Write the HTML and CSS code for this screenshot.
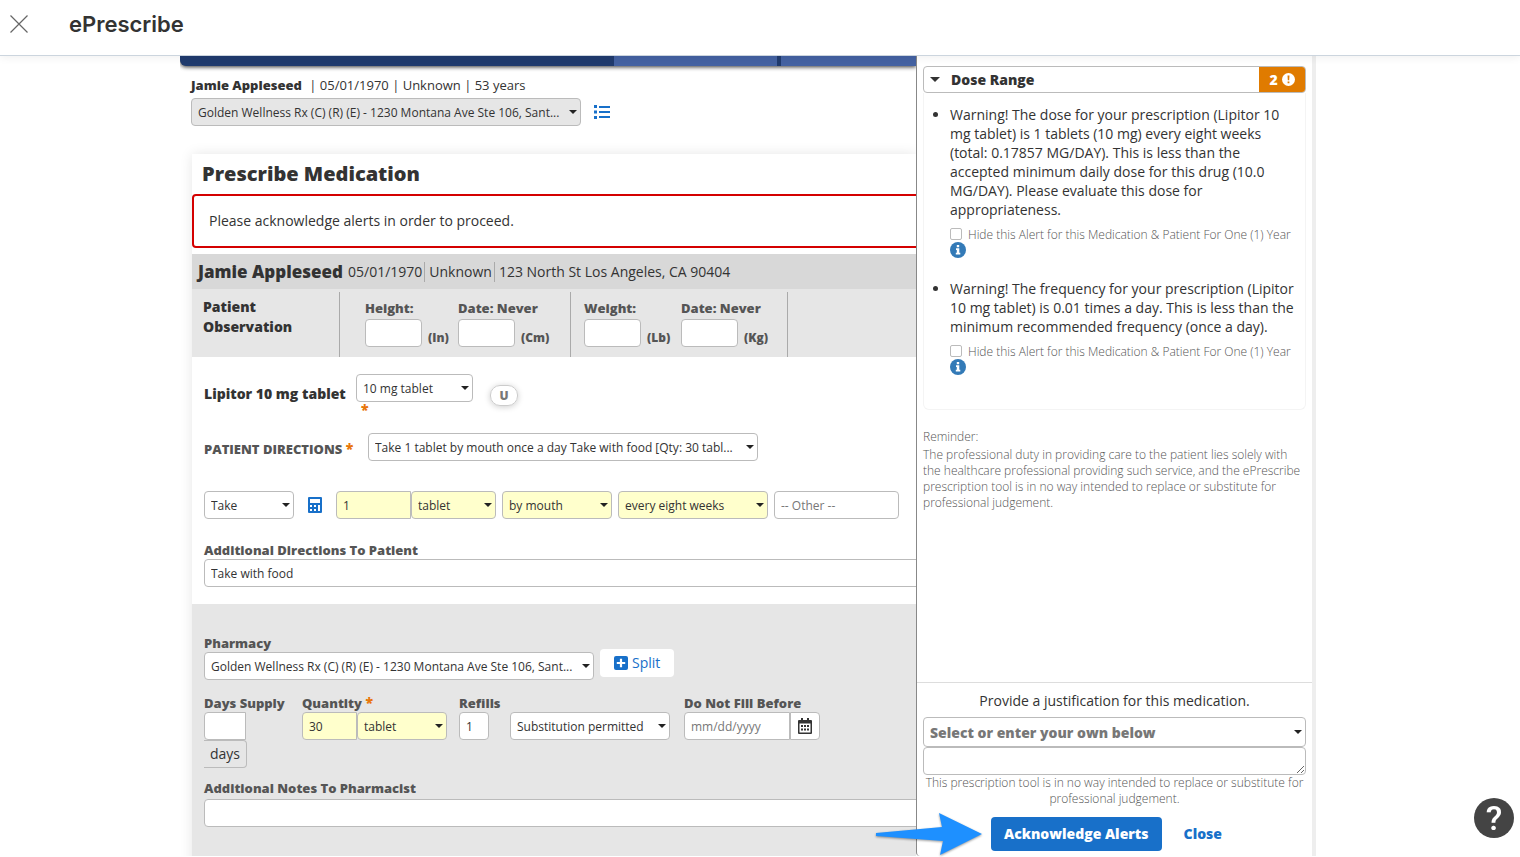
FILE: index.html
```html
<!DOCTYPE html>
<html lang="en">
  <head>
    <meta charset="UTF-8" />
    <meta name="viewport" content="width=device-width, initial-scale=1.0" />
    <title>ePrescribe</title>
    <link rel="stylesheet" href="styles.css">
  </head>
  <body>
    <header class="topbar">
      <button class="close-button" type="button" aria-label="Close">
        <svg width="18" height="18" viewBox="0 0 18 18" fill="none" stroke="#666" stroke-width="1.2">
          <path d="M0.5 0.5 17.5 17.5M17.5 0.5 0.5 17.5" />
        </svg>
      </button>
      <h1>ePrescribe</h1>
    </header>

    <div class="page">
      <main class="content">
        <nav class="nav" aria-label="Main">
          <span class="tab"></span>
          <span class="tab tab-last"></span>
        </nav>

        <div class="patient">
          <div class="patient-line"><b>Jamie Appleseed</b> | 05/01/1970 | Unknown | 53 years</div>
          <div class="patient-pharmacy">
            <select class="wide gray" aria-label="Patient pharmacy">
              <option>Golden Wellness Rx (C) (R) (E) - 1230 Montana Ave Ste 106, Sant...</option>
            </select>
            <button class="icon-button" type="button" aria-label="Pharmacy list">
              <svg width="16" height="14" viewBox="0 0 16 14" fill="#1870c9">
                <path d="M0 0h3v3H0zM0 5.5h3v3H0zM0 11h3v3H0zM5 1h11v2H5zM5 6h11v2H5zM5 11h11v2H5z" />
              </svg>
            </button>
          </div>
        </div>

        <form class="card">
          <h2>Prescribe Medication</h2>
          <div class="alert">Please acknowledge alerts in order to proceed.</div>

          <div class="person">
            <b>Jamie Appleseed</b>
            <span>05/01/1970</span>
            <span>Unknown</span>
            <span>123 North St Los Angeles, CA 90404</span>
          </div>

          <div class="observation">
            <h3>Patient Observation</h3>
            <div class="measures">
              <div class="measure">
                <label for="height-in">Height:</label>
                <div class="unit-row"><input id="height-in" type="text" /><span>(In)</span></div>
              </div>
              <div class="measure">
                <label for="height-cm">Date: Never</label>
                <div class="unit-row"><input id="height-cm" type="text" /><span>(Cm)</span></div>
              </div>
            </div>
            <div class="measures weight">
              <div class="measure">
                <label for="weight-lb">Weight:</label>
                <div class="unit-row"><input id="weight-lb" type="text" /><span>(Lb)</span></div>
              </div>
              <div class="measure">
                <label for="weight-kg">Date: Never</label>
                <div class="unit-row"><input id="weight-kg" type="text" /><span>(Kg)</span></div>
              </div>
            </div>
          </div>

          <div class="section">
            <div class="drug">
              <label class="drug-name" for="strength">Lipitor 10 mg tablet</label>
              <div class="strength">
                <select id="strength"><option>10 mg tablet</option></select>
                <span class="star">*</span>
              </div>
              <span class="badge">U</span>
            </div>

            <div class="directions">
              <label for="directions">PATIENT DIRECTIONS <span class="star">*</span></label>
              <select id="directions" class="wide">
                <option>Take 1 tablet by mouth once a day Take with food [Qty: 30 tabl...</option>
              </select>
            </div>

            <div class="sig">
              <select class="verb" aria-label="Verb"><option>Take</option></select>
              <button class="calc" type="button" aria-label="Dose calculator">
                <svg width="14" height="16" viewBox="0 0 14 16" fill="#1870c9">
                  <path fill-rule="evenodd" d="M1 0h12a1 1 0 0 1 1 1v14a1 1 0 0 1-1 1H1a1 1 0 0 1-1-1V1a1 1 0 0 1 1-1zM2 2v4h10V2zM2 8v2h2V8zM6 8v2h2V8zM10 8v6h2V8zM2 12v2h2v-2zM6 12v2h2v-2z" />
                </svg>
              </button>
              <div class="joined">
                <input class="amount" type="text" value="1" aria-label="Amount" />
                <select class="form yellow" aria-label="Form"><option>tablet</option></select>
              </div>
              <select class="route yellow" aria-label="Route"><option>by mouth</option></select>
              <select class="frequency yellow" aria-label="Frequency"><option>every eight weeks</option></select>
              <input class="other" type="text" placeholder="-- Other --" aria-label="Other" />
            </div>

            <div class="field">
              <label for="additional">Additional Directions To Patient</label>
              <input id="additional" type="text" value="Take with food" />
            </div>
          </div>

          <div class="section supply">
            <div class="pharmacy">
              <div class="field">
                <label for="pharmacy">Pharmacy</label>
                <select id="pharmacy" class="wide">
                  <option>Golden Wellness Rx (C) (R) (E) - 1230 Montana Ave Ste 106, Sant...</option>
                </select>
              </div>
              <button class="split" type="button">
                <svg width="14" height="14" viewBox="0 0 14 14">
                  <rect width="14" height="14" rx="2" fill="#1870c9" />
                  <path d="M7 2.8v8.4M2.8 7h8.4" stroke="#fff" stroke-width="2.2" />
                </svg>
                Split
              </button>
            </div>

            <div class="quantities">
              <div class="field days">
                <label for="days">Days Supply</label>
                <input id="days" type="text" />
                <span class="addon">days</span>
              </div>
              <div class="field quantity">
                <label for="quantity">Quantity <span class="star">*</span></label>
                <div class="joined">
                  <input id="quantity" class="count" type="text" value="30" />
                  <select class="pack yellow" aria-label="Quantity unit"><option>tablet</option></select>
                </div>
              </div>
              <div class="field refills">
                <label for="refills">Refills</label>
                <input id="refills" type="text" value="1" />
              </div>
              <select class="substitution" aria-label="Substitution"><option>Substitution permitted</option></select>
              <div class="field">
                <label for="fill-date">Do Not Fill Before</label>
                <div class="joined">
                  <input id="fill-date" class="date" type="text" placeholder="mm/dd/yyyy" />
                  <button class="calendar" type="button" aria-label="Pick a date">
                    <svg width="14" height="16" viewBox="0 0 14 16">
                      <path fill="#333" fill-rule="evenodd" d="M3 0h2v2h4V0h2v2h2a1 1 0 0 1 1 1v12a1 1 0 0 1-1 1H1a1 1 0 0 1-1-1V3a1 1 0 0 1 1-1h2zM1.500 5.500v9h11v-9z" />
                      <path fill="#333" d="M3 7h2v2H3zM6 7h2v2H6zM9 7h2v2H9zM3 10.500h2v2H3zM6 10.500h2v2H6zM9 10.500h2v2H9z" />
                    </svg>
                  </button>
                </div>
              </div>
            </div>

            <div class="field notes">
              <label for="notes">Additional Notes To Pharmacist</label>
              <input id="notes" type="text" />
            </div>
          </div>
        </form>
      </main>

      <aside class="panel">
        <div class="panel-body">
          <button class="range" type="button" aria-expanded="true">
            <svg width="10" height="5" viewBox="0 0 10 5" fill="#333"><path d="M0 0h10L5 5z" /></svg>
            <span class="range-title">Dose Range</span>
            <span class="range-count">2
              <svg width="13" height="13" viewBox="0 0 13 13">
                <circle cx="6.5" cy="6.5" r="6.5" fill="#fff" />
                <path d="M5.500 2.500h2l-.3 4.800h-1.400zM5.600 8.500h1.800v1.800H5.600z" fill="#e07b00" />
              </svg>
            </span>
          </button>

          <ul class="warnings">
            <li>
              Warning! The dose for your prescription (Lipitor 10 mg tablet) is 1 tablets (10 mg) every eight weeks (total: 0.17857 MG/DAY). This is less than the accepted minimum daily dose for this drug (10.0 MG/DAY). Please evaluate this dose for appropriateness.
              <label class="hide-alert"><input type="checkbox" />Hide this Alert for this Medication &amp; Patient For One (1) Year</label>
              <svg class="info" width="16" height="16" viewBox="0 0 16 16">
                <circle cx="8" cy="8" r="8" fill="#337ab7" />
                <path d="M6.800 3h2.400v2.200H6.800zM6 6.300h3.300v4.500h1V12.500H5.800v-1.700h1V8H6z" fill="#fff" />
              </svg>
            </li>
            <li>
              Warning! The frequency for your prescription (Lipitor 10 mg tablet) is 0.01 times a day. This is less than the minimum recommended frequency (once a day).
              <label class="hide-alert"><input type="checkbox" />Hide this Alert for this Medication &amp; Patient For One (1) Year</label>
              <svg class="info" width="16" height="16" viewBox="0 0 16 16">
                <circle cx="8" cy="8" r="8" fill="#337ab7" />
                <path d="M6.800 3h2.400v2.200H6.800zM6 6.300h3.300v4.500h1V12.500H5.800v-1.700h1V8H6z" fill="#fff" />
              </svg>
            </li>
          </ul>

          <div class="reminder">
            <div class="reminder-title">Reminder:</div>
            <p>The professional duty in providing care to the patient lies solely with the healthcare professional providing such service, and the ePrescribe prescription tool is in no way intended to replace or substitute for professional judgement.</p>
          </div>
        </div>

        <div class="panel-footer">
          <label for="reason">Provide a justification for this medication.</label>
          <select id="reason"><option>Select or enter your own below</option></select>
          <textarea aria-label="Justification"></textarea>
          <p>This prescription tool is in no way intended to replace or substitute for professional judgement.</p>
          <div class="actions">
            <button class="acknowledge" type="button">Acknowledge Alerts</button>
            <button class="dismiss" type="button">Close</button>
          </div>
          <svg class="pointer" width="110" height="46" viewBox="0 0 110 46" fill="#1e90ff">
            <path d="M1 21 67 15 64 1 107 22 65 43 68 29 1 24z" />
          </svg>
        </div>
      </aside>
    </div>

    <button class="help" type="button" aria-label="Help">?</button>
  </body>
</html>
```
FILE: styles.css
```css
* {
  box-sizing: border-box;
}
body {
  margin: 0;
  padding-bottom: 1px;
  height: 100vh;
  overflow: hidden;
  display: flex;
  flex-direction: column;
  background: #fff;
  color: #333;
  font-family: "Open Sans", "Noto Sans", sans-serif;
  font-size: 14px;
  line-height: 20px;
}
h1, h2, h3, p, ul {
  margin: 0;
}
b {
  font-weight: 800;
}
button {
  font: inherit;
  border: 0;
  padding: 0;
  background: none;
  cursor: pointer;
}
input, select, textarea {
  height: 28px;
  border: 1px solid #bbb;
  border-radius: 4px;
  padding: 0 6px;
  background-color: #fff;
  color: #333;
  font-family: inherit;
  font-size: 12px;
}
select {
  appearance: none;
  background-image: url("data:image/svg+xml,%3Csvg xmlns='http://www.w3.org/2000/svg' width='8' height='4'%3E%3Cpath d='M0 0h8L4 4z' fill='%23222'/%3E%3C/svg%3E");
  background-repeat: no-repeat;
  background-position: right 3px center;
}
input::placeholder {
  color: #777;
}
.wide {
  width: 390px;
}
.gray {
  background-color: #e6e6e6;
}
.yellow, .amount, .count {
  background-color: #ffffcc;
}
.star {
  color: #e8760a;
  font-size: 14px;
  line-height: 0;
  font-weight: 800;
}

/* top bar */
.topbar {
  position: relative;
  z-index: 1;
  flex: none;
  height: 56px;
  display: flex;
  align-items: center;
  gap: 41px;
  padding: 0 10px 8px;
  background: #fff;
  border-bottom: 1px solid #ccd5de;
  box-shadow: 0 2px 8px rgba(0, 0, 0, 0.06);
}
.close-button {
  display: flex;
}
.topbar h1 {
  font-family: Inter, sans-serif;
  font-size: 22px;
  font-weight: 600;
}
.page {
  flex: 1;
  min-height: 0;
  display: flex;
  padding: 0 204px 0 180px;
}

/* prescription form */
.content {
  flex: 1;
  min-width: 0;
  overflow: hidden;
}
.nav {
  height: 10px;
  display: flex;
  gap: 4px;
  padding-left: 434px;
  background: #203b6e;
  border-bottom-left-radius: 6px;
  box-shadow: 0 1px 4px rgba(0, 0, 0, 0.8);
}
.tab {
  width: 163px;
  background: #4462a2;
}
.tab-last {
  flex: 1;
}
.patient {
  padding: 9px 0 28px 11px;
}
.patient-line {
  font-size: 13px;
  line-height: 20px;
  margin-bottom: 3px;
}
.patient-line b {
  margin-right: 4px;
}
.patient-pharmacy {
  display: flex;
  align-items: center;
  gap: 13px;
}
.icon-button {
  display: flex;
}
.card {
  margin-left: 12px;
  box-shadow: 0 0 12px rgba(0, 0, 0, 0.1);
}
.card h2 {
  padding-left: 10px;
  font-size: 20px;
  line-height: 40px;
  font-weight: 800;
}
.alert {
  height: 54px;
  margin: 0 -4px 6px 0;
  padding: 15px;
  border: 2px solid #d40000;
  border-radius: 4px;
}
.person {
  display: flex;
  align-items: center;
  height: 35px;
  padding-left: 6px;
  background: #d8d8d8;
}
.person b {
  margin-right: 5px;
  font-size: 17px;
}
.person span + span {
  margin-left: 2px;
  padding-left: 4px;
  border-left: 1px solid #aaa;
}
.observation {
  display: flex;
  height: 68px;
  padding-top: 3px;
  background: #e6e6e6;
}
.observation h3 {
  width: 148px;
  padding: 5px 30px 0 11px;
  border-right: 1px solid #aaa;
  font-size: 14px;
  line-height: 20px;
  font-weight: 800;
}
.measures {
  display: grid;
  grid-template-columns: 93px 112px;
  padding: 5px 0 0 25px;
  border-right: 1px solid #aaa;
}
.measures.weight {
  grid-template-columns: 97px 106px;
  padding-left: 13px;
}
label, .unit-row {
  color: #555;
  font-size: 13px;
  font-weight: 800;
}
.measure label {
  display: block;
  line-height: 22px;
}
.unit-row {
  display: flex;
  align-items: flex-end;
  gap: 6px;
  font-size: 12px;
  line-height: 18px;
}
.unit-row input {
  width: 57px;
}
.section {
  padding: 17px 0 17px 12px;
}
.drug {
  display: flex;
}
.drug .drug-name {
  width: 152px;
  padding-top: 10px;
  color: #333;
  font-size: 14px;
}
.strength {
  width: 117px;
}
.strength select {
  display: block;
  width: 100%;
}
.strength .star {
  display: block;
  height: 31px;
  padding: 8px 0 0 5px;
}
.badge {
  align-self: flex-start;
  width: 28px;
  height: 21px;
  margin: 11px 0 0 17px;
  border: 1px solid #ccc;
  border-radius: 10px;
  box-shadow: 0 1px 6px rgba(0, 0, 0, 0.2);
  color: #777;
  font-size: 12px;
  line-height: 19px;
  font-weight: 800;
  text-align: center;
}
.directions {
  display: flex;
  align-items: center;
  margin-bottom: 30px;
}
.directions label {
  width: 164px;
  padding-top: 4px;
}
.sig {
  display: flex;
  gap: 6px;
  margin-bottom: 22px;
}
.verb {
  width: 90px;
}
.calc {
  width: 30px;
  display: flex;
  align-items: center;
  justify-content: center;
}
.joined {
  display: flex;
}
.joined input {
  border-top-right-radius: 0;
  border-bottom-right-radius: 0;
}
.amount {
  width: 75px;
}
.form {
  width: 85px;
}
.route {
  width: 110px;
}
.frequency {
  width: 150px;
}
.other {
  width: 125px;
}
.field {
  display: flex;
  flex-direction: column;
}
.field label {
  line-height: 18px;
}
#additional, #notes {
  margin-right: -4px;
}
.supply {
  height: 300px;
  padding-top: 30px;
  background: #e6e6e6;
}
.pharmacy {
  display: flex;
  gap: 6px;
  align-items: flex-end;
  margin-bottom: 14px;
}
.split {
  display: flex;
  align-items: center;
  gap: 4px;
  height: 28px;
  margin-bottom: 3px;
  padding: 0 14px;
  border-radius: 4px;
  background: #fff;
  color: #1870c9;
}
.quantities {
  display: flex;
  align-items: flex-start;
}
.days {
  width: 98px;
  align-items: flex-start;
}
.days input {
  width: 42px;
  border-radius: 4px 0 0 4px;
}
.addon {
  height: 28px;
  padding: 3px 6px;
  border: 1px solid #bbb;
  border-left: 0;
  border-radius: 0 4px 4px 0;
}
.quantity {
  width: 157px;
}
.count {
  width: 55px;
}
.pack {
  width: 90px;
}
.refills {
  width: 51px;
}
.refills input {
  width: 30px;
}
.substitution {
  width: 160px;
  margin: 18px 14px 0 0;
}
.date {
  width: 106px;
}
.calendar {
  display: flex;
  align-items: center;
  justify-content: center;
  width: 30px;
  border: 1px solid #bbb;
  border-radius: 0 4px 4px 0;
  background: #fff;
}
.notes {
  margin-top: 11px;
}
.notes label {
  padding-bottom: 2px;
}

/* alerts panel */
.panel {
  position: relative;
  flex: none;
  width: 400px;
  display: flex;
  flex-direction: column;
  background: #fff;
  border-left: 1px solid #888;
  border-right: 4px solid #eee;
  border-bottom-left-radius: 4px;
}
.panel-body {
  flex: 1;
  padding: 10px 6px 0;
}
.range {
  width: 100%;
  height: 27px;
  display: flex;
  align-items: center;
  padding-left: 6px;
  border: 1px solid #bbb;
  border-radius: 4px;
  overflow: hidden;
  color: #333;
  font-weight: 800;
}
.range-title {
  flex: 1;
  margin-left: 11px;
  text-align: left;
}
.range-count {
  display: flex;
  align-items: center;
  justify-content: center;
  gap: 4px;
  width: 46px;
  height: 100%;
  background: #e07b00;
  color: #fff;
}
.warnings {
  height: 317px;
  padding: 12px 10px 0 26px;
  border: 1px solid #f4f4f4;
  border-top: 0;
  border-radius: 0 0 6px 6px;
  line-height: 19px;
}
.warnings li {
  margin-bottom: 21px;
}
.hide-alert {
  display: flex;
  align-items: center;
  gap: 6px;
  height: 16px;
  margin-top: 7px;
  color: #555;
  font-size: 12px;
  font-weight: 300;
  white-space: nowrap;
}
.hide-alert input {
  appearance: none;
  flex: none;
  width: 12px;
  height: 12px;
  margin: 0;
  padding: 0;
  border-radius: 2px;
}
.info {
  display: block;
}
.reminder {
  padding-top: 17px;
  color: #555;
  font-size: 12px;
  line-height: 16px;
  font-weight: 300;
}
.reminder-title {
  line-height: 20px;
}
.panel-footer {
  display: flex;
  flex-direction: column;
  padding: 8px 6px 5px;
  border-top: 1px solid #ddd;
  text-align: center;
}
.panel-footer label {
  margin-bottom: 6px;
  color: #333;
  font-size: 14px;
  font-weight: 400;
}
.panel-footer select {
  height: 30px;
  color: #777;
  font-size: 14px;
  font-weight: 800;
}
.panel-footer p {
  color: #555;
  font-size: 12px;
  line-height: 16px;
  font-weight: 300;
  margin-bottom: 10px;
}
.actions {
  display: flex;
  gap: 22px;
  padding-left: 68px;
}
.acknowledge {
  height: 34px;
  padding: 0 13px;
  border-radius: 4px;
  background: #1870c9;
  color: #fff;
  font-weight: 800;
}
.dismiss {
  color: #1870c9;
  font-weight: 800;
}
.pointer {
  position: absolute;
  left: -42px;
  bottom: -2px;
  filter: drop-shadow(0 1px 1px rgba(0, 0, 0, 0.4));
}
.help {
  position: fixed;
  right: 6px;
  bottom: 19px;
  width: 40px;
  height: 40px;
  border-radius: 50%;
  background: #444;
  color: #fff;
  font-family: Roboto, sans-serif;
  font-size: 34px;
  font-weight: 500;
  line-height: 40px;
}
```
